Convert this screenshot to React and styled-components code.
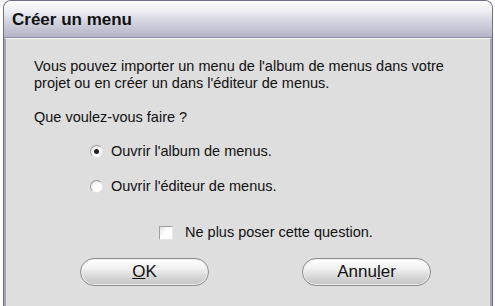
import React from 'react';
import styled, { createGlobalStyle } from 'styled-components';

const Global = createGlobalStyle`
  html, body {
    margin: 0;
    padding: 0;
    background: #ffffff;
  }
  body {
    font-family: "Liberation Sans", Arial, sans-serif;
  }
`;

const Window = styled.div`
  box-sizing: border-box;
  width: 490px;
  height: 306px;
  margin-left: 3px;
  border: 1px solid #6f6f88;
  border-bottom: none;
  border-radius: 8px 8px 0 0;
  background: #dedede;
  display: flex;
  flex-direction: column;
  overflow: hidden;
`;

const TitleBar = styled.div`
  height: 35px;
  flex: none;
  display: flex;
  align-items: center;
  padding-left: 8px;
  padding-top: 1px;
  background: linear-gradient(#fdfdfe 0%, #ececf2 30%, #c9c9d8 70%, #b4b4c8 100%);
  border-bottom: 1px solid #8d8da4;
  font-size: 17px;
  font-weight: bold;
  color: #111;
`;

const Body = styled.div`
  flex: 1;
  border-left: 2px solid #a3a3bb;
  border-right: 2px solid #a3a3bb;
  border-top: 1px solid #f6f6f6;
  padding: 19px 0 0 28px;
  font-size: 14.5px;
  color: #111;
  display: flex;
  flex-direction: column;
`;

const Para = styled.p`
  margin: 0;
  line-height: 17px;
`;

const Question = styled.p`
  margin: 17px 0 0;
  line-height: 17px;
`;

const Options = styled.div`
  display: flex;
  flex-direction: column;
  gap: 18px;
  margin: 17px 0 0 56px;
`;

const Option = styled.label`
  display: flex;
  align-items: center;
  gap: 8px;
  line-height: 17px;
`;

const Radio = styled.span`
  box-sizing: border-box;
  width: 13px;
  height: 13px;
  border-radius: 50%;
  border: 1px solid #9c9c9c;
  border-right-color: #e6e6e6;
  border-bottom-color: #e6e6e6;
  background: radial-gradient(circle at 65% 65%, #ffffff 40%, #ececec 70%, #cfcfcf 100%);
  display: flex;
  align-items: center;
  justify-content: center;
  &::after {
    content: '';
    width: 5px;
    height: 5px;
    border-radius: 50%;
    background: ${p => (p.$on ? '#222' : 'transparent')};
  }
`;

const CheckRow = styled.label`
  display: flex;
  align-items: center;
  gap: 12px;
  margin: 29px 0 0 125px;
  line-height: 17px;
`;

const Box = styled.span`
  box-sizing: border-box;
  width: 14px;
  height: 14px;
  border: 1px solid #a0a0a0;
  border-right-color: #e4e4e4;
  border-bottom-color: #e4e4e4;
  background: linear-gradient(135deg, #e0e0e0, #ffffff 45%);
`;

const Buttons = styled.div`
  display: flex;
  gap: 93px;
  margin: 17px 0 0 46px;
`;

const Button = styled.button`
  box-sizing: border-box;
  width: 129px;
  height: 28px;
  border-radius: 14px;
  border: 1px solid #8c8c8c;
  background: linear-gradient(#ffffff 0%, #f2f2f2 35%, #d6d6d6 70%, #c4c4c4 100%);
  box-shadow: inset 0 0 0 1px #efefef;
  font-family: "Liberation Sans", Arial, sans-serif;
  font-size: 17px;
  color: #111;
  padding: 0;
  u {
    text-decoration: underline;
  }
`;

export default function App() {
  return (
    <>
      <Global />
      <Window>
        <TitleBar>Créer un menu</TitleBar>
        <Body>
          <Para>
            Vous pouvez importer un menu de l'album de menus dans votre
            <br />
            projet ou en créer un dans l'éditeur de menus.
          </Para>
          <Question>Que voulez-vous faire ?</Question>
          <Options>
            <Option>
              <Radio $on />
              Ouvrir l'album de menus.
            </Option>
            <Option>
              <Radio />
              Ouvrir l'éditeur de menus.
            </Option>
          </Options>
          <CheckRow>
            <Box />
            Ne plus poser cette question.
          </CheckRow>
          <Buttons>
            <Button>
              <u>O</u>K
            </Button>
            <Button>
              Annu<u>l</u>er
            </Button>
          </Buttons>
        </Body>
      </Window>
    </>
  );
}
